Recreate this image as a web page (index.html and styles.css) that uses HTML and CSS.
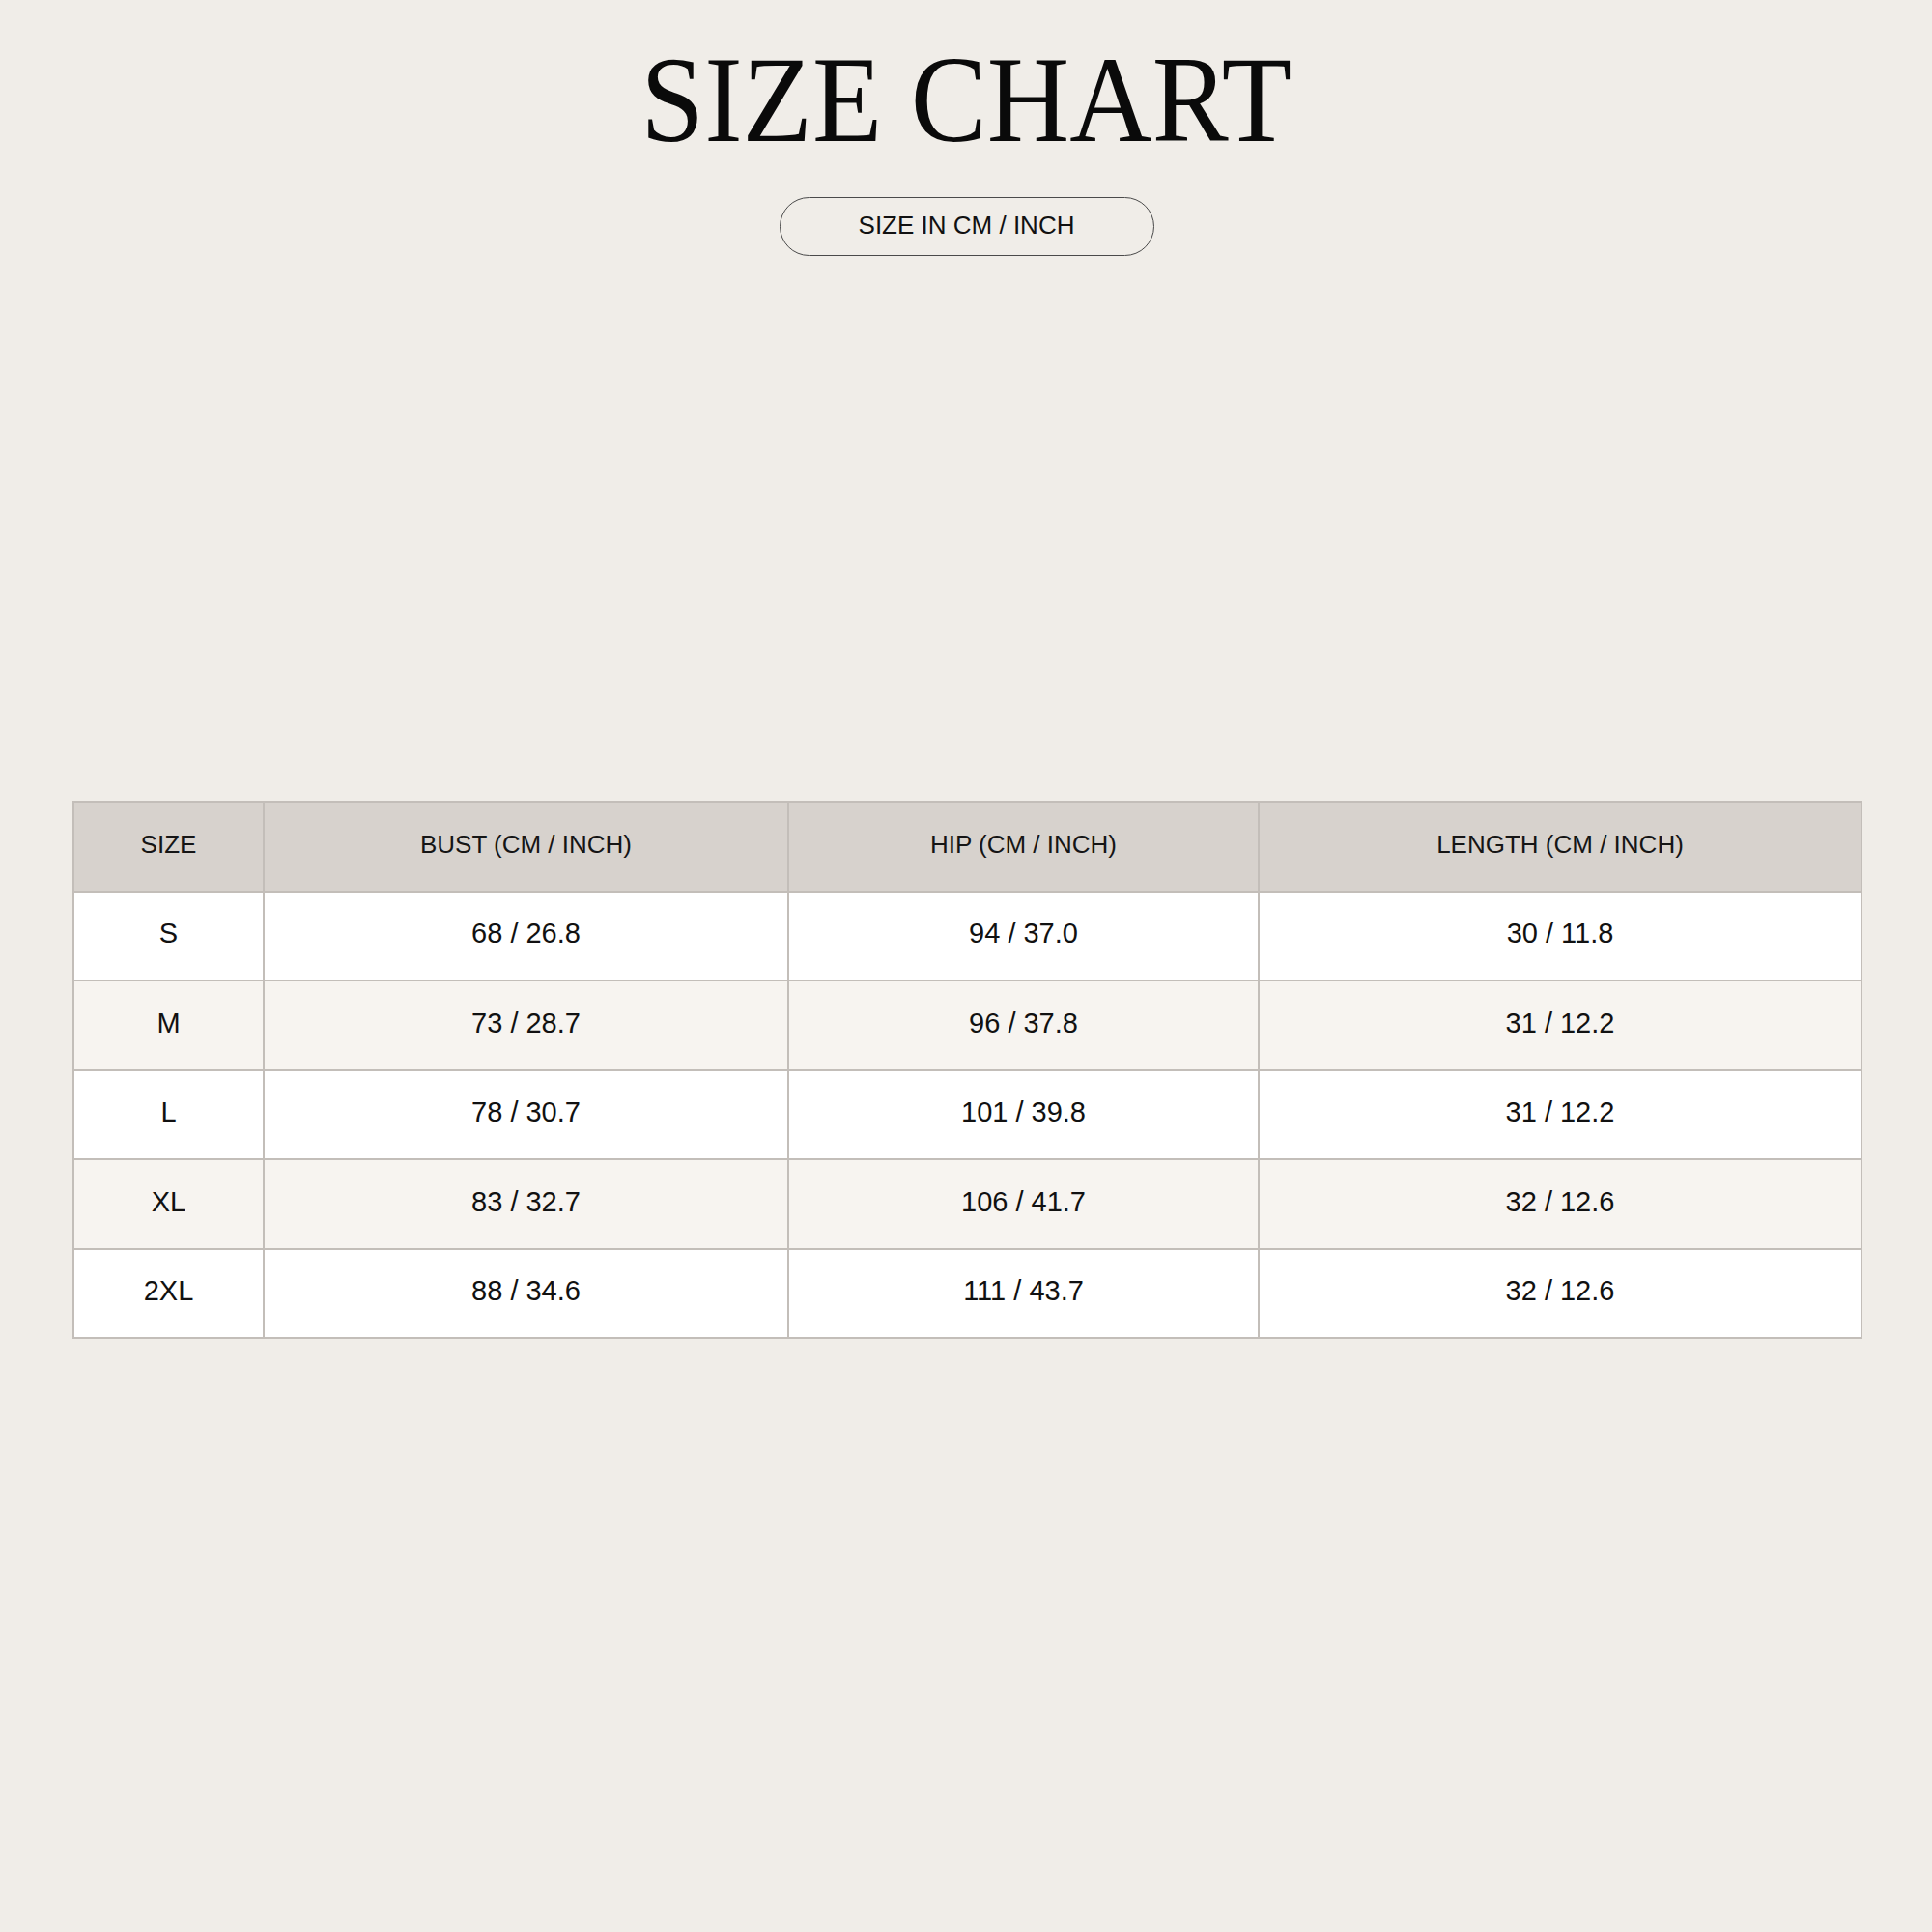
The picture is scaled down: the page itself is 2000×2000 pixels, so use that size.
FILE: index.html
```html
<!DOCTYPE html>
<html lang="en">
<head>
<meta charset="utf-8">
<title>Size Chart</title>
<link rel="stylesheet" href="styles.css">
</head>
<body>
<main class="page">
  <header class="head">
    <h1 class="title"><span class="title-text">SIZE CHART</span></h1>
    <div class="pill">SIZE IN CM / INCH</div>
  </header>
  <table class="chart">
    <colgroup>
      <col class="c-size">
      <col class="c-bust">
      <col class="c-hip">
      <col class="c-len">
    </colgroup>
    <thead>
      <tr><th>SIZE</th><th>BUST (CM / INCH)</th><th>HIP (CM / INCH)</th><th>LENGTH (CM / INCH)</th></tr>
    </thead>
    <tbody>
      <tr><td>S</td><td>68 / 26.8</td><td>94 / 37.0</td><td>30 / 11.8</td></tr>
      <tr><td>M</td><td>73 / 28.7</td><td>96 / 37.8</td><td>31 / 12.2</td></tr>
      <tr><td>L</td><td>78 / 30.7</td><td>101 / 39.8</td><td>31 / 12.2</td></tr>
      <tr><td>XL</td><td>83 / 32.7</td><td>106 / 41.7</td><td>32 / 12.6</td></tr>
      <tr><td>2XL</td><td>88 / 34.6</td><td>111 / 43.7</td><td>32 / 12.6</td></tr>
    </tbody>
  </table>
</main>
</body>
</html>
```

FILE: styles.css
```css
html, body {
  margin: 0;
  padding: 0;
  background: #f0ede8;
}
body {
  width: 2000px;
  min-height: 2000px;
  font-family: "Liberation Sans", Arial, sans-serif;
  color: #111;
}
.page {
  padding: 39px 74px 0 75px;
}
.head {
  display: flex;
  flex-direction: column;
  align-items: center;
}
.title {
  margin: 0;
  font-family: "Liberation Serif", "Times New Roman", serif;
  font-weight: 400;
  font-size: 128px;
  line-height: 128px;
  height: 128px;
  color: #0a0a0a;
}
.title-text {
  display: inline-block;
  transform: scaleX(0.925);
  transform-origin: center;
}
.pill {
  margin-top: 37px;
  box-sizing: border-box;
  width: 388px;
  height: 61px;
  border: 1px solid #4a4a4a;
  border-radius: 31px;
  display: flex;
  align-items: center;
  justify-content: center;
  font-size: 26px;
  color: #111;
  padding-bottom: 2px;
}
.chart {
  margin-top: 564px;
  width: 1851px;
  border-collapse: collapse;
  table-layout: fixed;
  border: 2px solid #c3beb9;
}
.c-size { width: 197px; }
.c-bust { width: 543px; }
.c-hip { width: 487px; }
.c-len { width: 624px; }
.chart th,
.chart td {
  border: 2px solid #c3beb9;
  text-align: center;
  vertical-align: middle;
  height: 86.5px;
  padding: 0 0 4px 0;
  box-sizing: content-box;
}
.chart th {
  background: #d7d2cd;
  font-weight: 400;
  font-size: 26px;
  color: #151515;
}
.chart td {
  font-size: 29px;
  color: #111;
  background: #ffffff;
}
.chart tbody tr:nth-child(even) td {
  background: #f7f4f0;
}
```
